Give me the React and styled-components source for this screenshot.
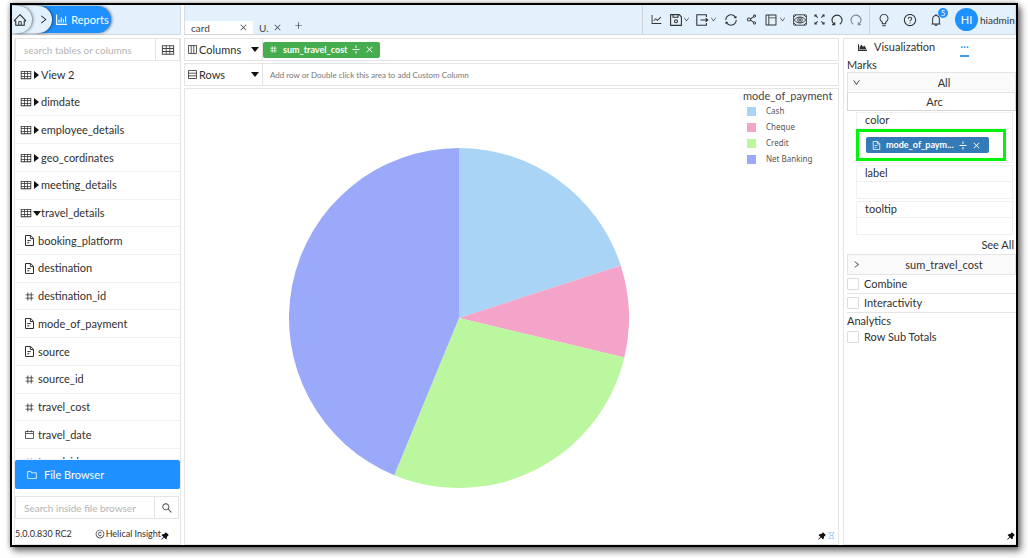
import React from "react";
import styled, { createGlobalStyle, css } from "styled-components";
import {
  AiOutlineHome, AiOutlineRight, AiOutlineDown, AiOutlineTable,
  AiOutlineNumber, AiOutlineCalendar, AiOutlineFolder, AiOutlineSearch,
  AiOutlineCopyright, AiFillPushpin, AiOutlineClose, AiOutlinePlus, AiOutlineLineChart,
  AiOutlineSync, AiOutlineShareAlt, AiOutlineLayout, AiOutlineBulb,
  AiOutlineQuestionCircle, AiOutlineBell, AiOutlineHourglass,
} from "react-icons/ai";
import { FaChartArea } from "react-icons/fa";

const line = "#e4e4e4";
const faint = "#f0f0f0";
const sky = "#e3f1fd";
const blue = "#1e90ff";

const Global = createGlobalStyle`
  * { box-sizing: border-box; }
  body { margin: 0; background: #fff; font-family: Lato, "Liberation Sans", sans-serif; font-size: 11px; line-height: 14px; color: #303030; overflow: hidden; }
  button, input { font: inherit; color: inherit; }
  button { background: none; border: 0; padding: 0; display: flex; align-items: center; justify-content: center; flex: none; cursor: pointer; }
  svg { display: block; flex: none; }
  ul { list-style: none; margin: 0; padding: 0; }
`;

const Frame = styled.div`
  margin: 3px 10px 11px;
  height: calc(100vh - 14px);
  min-height: 480px;
  border: 2px solid #000;
  box-shadow: 3px 4px 7px rgba(0, 0, 0, 0.55), 0 0 5px rgba(0, 0, 0, 0.3);
  background: #fff;
  display: grid;
  grid-template-columns: 169px minmax(0, 1fr);
  grid-template-rows: 30px minmax(0, 1fr);
  column-gap: 3px;
  row-gap: 3px;
  overflow: hidden;
`;

const Bar = styled.header`
  background: ${sky};
  border-bottom: 1px solid #d3d7da;
  border-right: 1px solid #d8dde1;
  border-left: ${(p) => (p.$edge ? "1px solid #d8dde1" : "0")};
  display: flex;
  min-width: 0;
`;

const Crumbs = styled.nav`
  display: flex;
  align-items: center;
`;

const Crumb = styled.button`
  position: relative;
  z-index: ${(p) => p.$level};
  height: 27px;
  width: ${(p) => p.$width}px;
  margin-left: ${(p) => (p.$first ? 0 : -16)}px;
  padding-left: ${(p) => (p.$first ? 0 : 18)}px;
  padding-right: ${(p) => (p.$first ? 4 : 0)}px;
  border-radius: 0 14px 14px 0;
  background: ${(p) => (p.$active ? blue : sky)};
  color: ${(p) => (p.$active ? "#fff" : "#222")};
  gap: 4px;
  box-shadow: 1px 0 3px rgba(0, 0, 0, 0.5);
`;

const Tabs = styled.div`
  flex: 1;
  display: flex;
  align-items: flex-end;
  min-width: 0;
`;

const Tab = styled.div`
  height: 13px;
  width: ${(p) => p.$width}px;
  padding: 0 5px 0 6px;
  display: flex;
  align-items: center;
  justify-content: space-between;
  background: ${(p) => (p.$active ? "#fff" : "transparent")};
  font-size: 10px;
  color: #444;
`;

const AddTab = styled.button`
  height: 18px;
  width: 22px;
`;

const Tools = styled.div`
  width: 227px;
  border-left: 1px solid #cdd6dc;
  display: flex;
  align-items: center;
  justify-content: space-between;
  padding: 0 7px;
  color: #333;
`;

const Tool = styled.button`
  gap: 1px;
  opacity: ${(p) => (p.$dim ? 0.55 : 1)};
`;

const User = styled.div`
  width: 146px;
  border-left: 1px solid #cdd6dc;
  display: flex;
  align-items: center;
  gap: 12px;
  padding-left: 7px;
  overflow: hidden;
  white-space: nowrap;
`;

const Bell = styled.button`
  position: relative;
`;

const Badge = styled.span`
  position: absolute;
  top: -5px;
  right: -5px;
  width: 10px;
  height: 10px;
  border-radius: 5px;
  background: ${blue};
  color: #fff;
  font-size: 8px;
  line-height: 10px;
`;

const Account = styled.button`
  gap: 2px;
  font-size: 10px;
`;

const Avatar = styled.span`
  width: 23px;
  height: 23px;
  border-radius: 12px;
  background: ${blue};
  color: #fff;
  font-size: 11px;
  line-height: 23px;
`;

const Sidebar = styled.aside`
  margin-left: 2px;
  border: 1px solid ${line};
  border-top: 0;
  display: flex;
  flex-direction: column;
  min-height: 0;
`;

const SearchBox = styled.form`
  flex: none;
  display: flex;
  height: 23px;
  border: 1px solid ${line};
  margin: ${(p) => (p.$low ? "7px 1px 0 0" : "0")};
`;

const SearchInput = styled.input`
  flex: 1;
  min-width: 0;
  border: 0;
  border-right: 1px solid ${line};
  padding: 0 8px;
  outline: 0;
  background: transparent;
  font-size: 10px;
  &::placeholder { color: #b4b4b4; opacity: 1; }
`;

const SearchButton = styled.button`
  width: 23px;
  color: #444;
`;

const Tree = styled.ul`
  flex: 1;
  min-height: 0;
  overflow: hidden;
  display: grid;
  grid-template-rows: repeat(14, minmax(0, 1fr)) 11px;
`;

const TreeItem = styled.li`
  min-height: 0;
  overflow: hidden;
  border-bottom: 1px solid ${faint};
`;

const TreeButton = styled.button`
  width: 100%;
  height: 27px;
  justify-content: flex-start;
  gap: ${(p) => (p.$child ? 3 : 1)}px;
  padding-left: ${(p) => (p.$child ? 9 : 5)}px;
`;

const Caret = styled.span`
  width: 7px;
  display: flex;
  justify-content: center;
  &::before {
    content: "";
    border: solid transparent;
    ${(p) => p.$open
      ? css`border-width: 5px 4px 0; border-top-color: #111;`
      : css`border-width: 4px 0 4px 5px; border-left-color: #111;`}
  }
`;

const FileBrowser = styled.button`
  height: 29px;
  background: ${blue};
  color: #fff;
  border-radius: 2px;
  justify-content: flex-start;
  gap: 6px;
  padding-left: 11px;
  font-size: 11px;
`;

const SideFoot = styled.footer`
  position: relative;
  height: 25px;
  display: flex;
  justify-content: space-between;
  align-items: center;
  padding: 4px 19px 0 0;
  font-size: 9px;
  white-space: nowrap;
`;

const Owner = styled.span`
  display: flex;
  align-items: center;
  gap: 1px;
`;

const SidePin = styled.span`
  position: absolute;
  right: 10px;
  bottom: 3px;
  color: #111;
`;

const Body = styled.div`
  display: grid;
  grid-template-columns: minmax(0, 1fr) 173px;
  column-gap: 4px;
  min-height: 0;
`;

const Workspace = styled.main`
  display: flex;
  flex-direction: column;
  gap: 2px;
  min-height: 0;
`;

const Shelf = styled.section`
  flex: none;
  height: 23px;
  border: 1px solid ${line};
  display: flex;
  align-items: center;
`;

const ShelfName = styled.button`
  width: 78px;
  height: 100%;
  padding: 0 4px 0 3px;
  justify-content: flex-start;
  gap: 2px;
  border-right: 1px solid ${line};
`;

const Grow = styled.span`
  flex: 1;
  text-align: left;
`;

const Hint = styled.span`
  padding-left: 7px;
  font-size: 8px;
  color: #777;
`;

const Chip = styled.div`
  width: ${(p) => p.$width}px;
  height: 16px;
  background: ${(p) => p.$color};
  color: #fff;
  border-radius: 2px;
  display: flex;
  align-items: center;
  gap: 5px;
  padding: 0 8px 0 6px;
  font-size: 9px;
  font-weight: 700;
  white-space: nowrap;
`;

const ChipText = styled.span`
  flex: 1;
`;

const Canvas = styled.section`
  position: relative;
  flex: 1;
  min-height: 0;
  border: 1px solid ${line};
  display: flex;
`;

const Plot = styled.div`
  flex: 1;
  min-width: 0;
  padding-top: 3px;
  display: flex;
  align-items: center;
  justify-content: center;
`;

const Legend = styled.div`
  width: 95px;
  margin-left: 10px;
  font-family: "Noto Sans", sans-serif;
  font-size: 8px;
  color: #555;
`;

const LegendTitle = styled.div`
  font-family: Lato, "Liberation Sans", sans-serif;
  font-size: 11px;
  line-height: 14px;
  color: #444;
`;

const LegendRow = styled.li`
  height: 16px;
  display: flex;
  align-items: center;
  gap: 10px;
  padding-left: 4px;
`;

const Swatch = styled.span`
  width: 9px;
  height: 9px;
  background: ${(p) => p.$color};
`;

const CornerPin = styled.div`
  position: absolute;
  right: ${(p) => (p.$flush ? 0 : 2)}px;
  bottom: 3px;
  display: flex;
  color: #111;
`;

const Faded = styled.span`
  color: #7fbaf5;
`;

const Panel = styled.aside`
  position: relative;
  border: 1px solid ${line};
  border-right: 0;
  padding-left: 3px;
  min-height: 0;
  overflow: hidden;
`;

const PanelTabs = styled.div`
  height: 18px;
  display: flex;
  gap: 25px;
  padding-left: 11px;
`;

const PanelTab = styled.button`
  gap: 7px;
  color: ${(p) => (p.$active ? blue : "#303030")};
  border-bottom: 2px solid ${(p) => (p.$active ? "#3c9bea" : "transparent")};
`;

const PanelLabel = styled.div`
  height: 15px;
  line-height: 15px;
`;

const Fold = styled.button`
  width: 100%;
  height: 21px;
  padding-left: 4px;
  border: 1px solid ${line};
  background: #fafafa;
`;

const Centered = styled.span`
  flex: 1;
  text-align: center;
  padding-left: 12px;
`;

const Arc = styled.button`
  width: 100%;
  height: 18px;
  border: 1px solid #d8d8d8;
  border-top: 0;
  padding-left: 6px;
`;

const Slots = styled.div`
  display: grid;
  gap: 2px;
  padding: 1px 3px 0 9px;
`;

const Slot = styled.section`
  border: 1px solid ${faint};
`;

const SlotName = styled.div`
  height: 16px;
  line-height: 14px;
  padding-left: 8px;
  border-bottom: 1px solid ${faint};
`;

const SlotDrop = styled.div`
  height: ${(p) => (p.$tall ? 33 : 16)}px;
`;

const Highlight = styled.div`
  width: 150px;
  height: 32px;
  margin-left: -1px;
  border: 3px solid #00f30a;
  padding: 5px 0 0 7px;
`;

const SeeAll = styled.button`
  margin: 0 2px 0 auto;
  height: 19px;
`;

const Check = styled.label`
  display: flex;
  align-items: center;
  gap: 5px;
  height: ${(p) => (p.$plain ? 18 : 19)}px;
  border-bottom: ${(p) => (p.$plain ? 0 : 1)}px solid ${line};
`;

const Tick = styled.input`
  appearance: none;
  width: 12px;
  height: 12px;
  margin: 0;
  border: 1px solid #dcdcdc;
  border-radius: 1px;
  background: #fff;
`;

const stroke = { fill: "none", stroke: "currentColor", strokeWidth: 1.1 };

const SaveIcon = () => (
  <svg width="12" height="12" viewBox="0 0 12 12" {...stroke}>
    <path d="M.6.6h8.6l2.2 2.2v8.6H.6zM3 .6v2.6h5V.6" />
    <circle cx="6" cy="7.2" r="1.5" />
  </svg>
);
const ExportIcon = () => (
  <svg width="13" height="12" viewBox="0 0 13 12" {...stroke}>
    <path d="M10.4 3V.8H.8v10.4h9.6V9M4.4 6h7.4M9.6 4.2L11.8 6 9.6 7.8" />
  </svg>
);
const BarsIcon = () => (
  <svg width="11" height="11" viewBox="0 0 11 11" {...stroke}>
    <path d="M.6.5v9.9H11M3 8.6V5.8M5.2 8.6V3.6M7.4 8.6V5M9.6 8.6V2.2" />
  </svg>
);
const TextFile = ({ size }) => (
  <svg width={size} height={size} viewBox="0 0 11 11" {...stroke} strokeWidth="1">
    <path d="M1.5.5h5.2l2.8 2.8v7.2h-8zM6.4.6v3h3M3.3 5.6h3.4M3.3 7.8h2" />
  </svg>
);
const EyeFrame = () => (
  <svg width="14" height="12" viewBox="0 0 14 12" {...stroke} strokeWidth="0.9">
    <rect x=".6" y=".8" width="12.8" height="10.4" rx="1" />
    <path d="M1.4 6C3.6 2 10.4 2 12.6 6 10.4 10 3.6 10 1.4 6z" />
    <circle cx="7" cy="6" r="2.3" />
    <circle cx="7" cy="6" r=".7" />
    <path d="M1 3l2-2M13 3l-2-2M1 9l2 2M13 9l-2 2" />
  </svg>
);
const Expand = () => (
  <svg width="11" height="11" viewBox="0 0 12 12" {...stroke}>
    <path d="M1 1l3 3M11 1L8 4M1 11l3-3M11 11L8 8M1 3V1h2M9 1h2v2M1 9v2h2M9 11h2V9" />
  </svg>
);
const Turn = ({ flip }) => (
  <svg width="12" height="12" viewBox="0 0 12 12" {...stroke}>
    <g transform={flip ? "translate(12 0) scale(-1 1)" : undefined}>
      <path d="M3.4 10.4A5 5 0 1 1 8.8 10.3M1.2 10.6h2.5V8.2" />
    </g>
  </svg>
);
const Split = () => (
  <svg width="8" height="9" viewBox="0 0 8 9" {...stroke} strokeWidth="1">
    <path d="M.5 4.5h7M4 .5v2.4M4 6.1v2.4" />
  </svg>
);
const Grid = ({ rows }) => (
  <svg width="9" height="9" viewBox="0 0 9 9" {...stroke} strokeWidth="0.8">
    <path d={rows ? "M.5.5h8v8h-8zM.5 3.2h8M.5 5.8h8" : "M.5.5h8v8h-8zM3.2.5v8M5.8.5v8"} />
  </svg>
);

const tree = [
  ["View 2", "table"], ["dimdate", "table"], ["employee_details", "table"],
  ["geo_cordinates", "table"], ["meeting_details", "table"], ["travel_details", "open"],
  ["booking_platform", "text"], ["destination", "text"], ["destination_id", "number"],
  ["mode_of_payment", "text"], ["source", "text"], ["source_id", "number"],
  ["travel_cost", "number"], ["travel_date", "date"], ["travel_id", "number"],
];
const fieldIcons = { text: TextFile, number: AiOutlineNumber, date: AiOutlineCalendar };

const slices = [
  { name: "Cash", color: "#a9d4f5", from: 0, to: 72 },
  { name: "Cheque", color: "#f4a4c9", from: 72, to: 103.4 },
  { name: "Credit", color: "#bbf79f", from: 103.4, to: 202.4 },
  { name: "Net Banking", color: "#9aa9f9", from: 202.4, to: 360 },
];
const point = (deg) => {
  const a = (deg * Math.PI) / 180;
  return `${170 + 170 * Math.sin(a)} ${170 - 170 * Math.cos(a)}`;
};

const TreeRow = ({ name, kind }) => {
  const Icon = fieldIcons[kind];
  return (
    <TreeItem>
      <TreeButton $child={!!Icon}>
        {Icon ? <Icon size={11} /> : <><AiOutlineTable size={12} /><Caret $open={kind === "open"} /></>}
        <span>{name}</span>
      </TreeButton>
    </TreeItem>
  );
};

export default function App() {
  return (
    <>
      <Global />
      <Frame>
        <Bar>
          <Crumbs>
            <Crumb $level={3} $width={20} $first aria-label="Home"><AiOutlineHome size={14} /></Crumb>
            <Crumb $level={2} $width={36} aria-label="Next"><AiOutlineRight size={11} /></Crumb>
            <Crumb $level={1} $width={75} $active><BarsIcon />Reports</Crumb>
          </Crumbs>
        </Bar>
        <Bar $edge>
          <Tabs>
            <Tab $active $width={68}>card<button aria-label="Close card"><AiOutlineClose size={9} /></button></Tab>
            <Tab $width={34}>U.<button aria-label="Close U."><AiOutlineClose size={9} /></button></Tab>
            <AddTab aria-label="Add tab"><AiOutlinePlus size={9} /></AddTab>
          </Tabs>
          <Tools>
            <Tool aria-label="Chart"><AiOutlineLineChart size={13} /></Tool>
            <Tool aria-label="Save"><SaveIcon /><AiOutlineDown size={7} /></Tool>
            <Tool aria-label="Export"><ExportIcon /><AiOutlineDown size={7} /></Tool>
            <Tool aria-label="Refresh"><AiOutlineSync size={14} /></Tool>
            <Tool aria-label="Share"><AiOutlineShareAlt size={13} /></Tool>
            <Tool aria-label="Layout"><AiOutlineLayout size={14} /><AiOutlineDown size={7} /></Tool>
            <Tool aria-label="Preview"><EyeFrame /></Tool>
            <Tool aria-label="Full screen"><Expand /></Tool>
            <Tool aria-label="Undo"><Turn /></Tool>
            <Tool aria-label="Redo" $dim><Turn flip /></Tool>
          </Tools>
          <User>
            <Tool aria-label="Tips"><AiOutlineBulb size={14} /></Tool>
            <Tool aria-label="Help"><AiOutlineQuestionCircle size={14} /></Tool>
            <Bell aria-label="Notifications"><AiOutlineBell size={14} /><Badge>5</Badge></Bell>
            <Account><Avatar>HI</Avatar>hiadmin</Account>
          </User>
        </Bar>

        <Sidebar>
          <SearchBox>
            <SearchInput aria-label="search tables or columns" placeholder="search tables or columns" />
            <SearchButton type="button" aria-label="Tables"><AiOutlineTable size={14} /></SearchButton>
          </SearchBox>
          <Tree>{tree.map(([name, kind]) => <TreeRow key={name} name={name} kind={kind} />)}</Tree>
          <FileBrowser><AiOutlineFolder size={12} />File Browser</FileBrowser>
          <SearchBox $low>
            <SearchInput aria-label="Search inside file browser" placeholder="Search inside file browser" />
            <SearchButton type="button" aria-label="Search"><AiOutlineSearch size={12} /></SearchButton>
          </SearchBox>
          <SideFoot>
            <span>5.0.0.830 RC2</span>
            <Owner><AiOutlineCopyright size={10} />Helical Insight</Owner>
            <SidePin><AiFillPushpin size={10} /></SidePin>
          </SideFoot>
        </Sidebar>

        <Body>
          <Workspace>
            <Shelf>
              <ShelfName><Grid /><Grow>Columns</Grow><Caret $open /></ShelfName>
              <Chip $width={117} $color="#45ad4d">
                <AiOutlineNumber size={9} /><ChipText>sum_travel_cost</ChipText>
                <button aria-label="Split"><Split /></button>
                <button aria-label="Remove"><AiOutlineClose size={9} /></button>
              </Chip>
            </Shelf>
            <Shelf>
              <ShelfName><Grid rows /><Grow>Rows</Grow><Caret $open /></ShelfName>
              <Hint>Add row or Double click this area to add Custom Column</Hint>
            </Shelf>
            <Canvas>
              <Plot>
                <svg width="340" height="340" viewBox="0 0 340 340" role="img" aria-label="Travel cost by mode of payment">
                  {slices.map((s) => (
                    <path
                      key={s.name}
                      fill={s.color}
                      d={`M170 170L${point(s.from)}A170 170 0 ${s.to - s.from > 180 ? 1 : 0} 1 ${point(s.to)}Z`}
                    />
                  ))}
                </svg>
              </Plot>
              <Legend>
                <LegendTitle>mode_of_payment</LegendTitle>
                <ul>{slices.map((s) => <LegendRow key={s.name}><Swatch $color={s.color} />{s.name}</LegendRow>)}</ul>
              </Legend>
              <CornerPin><AiFillPushpin size={10} /><Faded><AiOutlineHourglass size={9} /></Faded></CornerPin>
            </Canvas>
          </Workspace>

          <Panel>
            <PanelTabs>
              <PanelTab><FaChartArea size={9} />Visualization</PanelTab>
              <PanelTab $active aria-label="More">···</PanelTab>
            </PanelTabs>
            <PanelLabel>Marks</PanelLabel>
            <Fold><AiOutlineDown size={9} /><Centered>All</Centered></Fold>
            <Arc>Arc</Arc>
            <Slots>
              <Slot>
                <SlotName>color</SlotName>
                <SlotDrop $tall>
                  <Highlight>
                    <Chip $width={123} $color="#337ab7">
                      <TextFile size={9} /><ChipText>mode_of_paym...</ChipText>
                      <button aria-label="Split"><Split /></button>
                      <button aria-label="Remove"><AiOutlineClose size={9} /></button>
                    </Chip>
                  </Highlight>
                </SlotDrop>
              </Slot>
              <Slot><SlotName>label</SlotName><SlotDrop /></Slot>
              <Slot><SlotName>tooltip</SlotName><SlotDrop /></Slot>
            </Slots>
            <SeeAll>See All</SeeAll>
            <Fold><AiOutlineRight size={9} /><Centered>sum_travel_cost</Centered></Fold>
            <Check><Tick type="checkbox" />Combine</Check>
            <Check><Tick type="checkbox" />Interactivity</Check>
            <PanelLabel>Analytics</PanelLabel>
            <Check $plain><Tick type="checkbox" />Row Sub Totals</Check>
            <CornerPin $flush><AiFillPushpin size={10} /></CornerPin>
          </Panel>
        </Body>
      </Frame>
    </>
  );
}
